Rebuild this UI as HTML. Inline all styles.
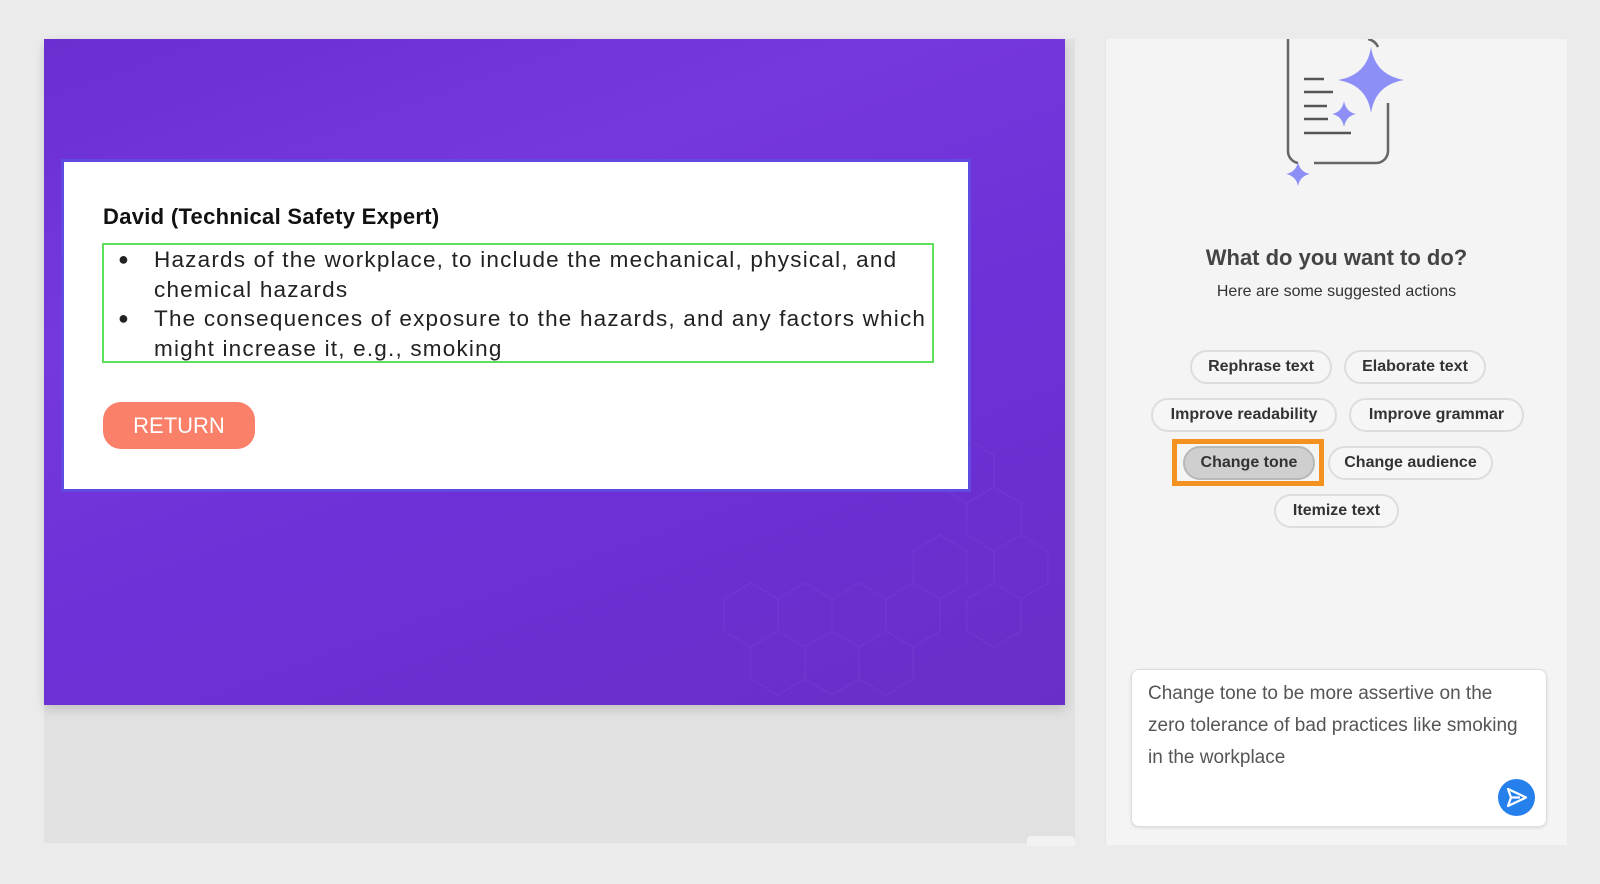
<!DOCTYPE html>
<html><head><meta charset="utf-8"><style>
*{margin:0;padding:0;box-sizing:border-box}
body{width:1600px;height:884px;background:#ebebeb;position:relative;overflow:hidden;font-family:"Liberation Sans",sans-serif}
.gray{position:absolute;left:44px;top:39px;width:1031px;height:804px;background:#e1e1e1}
.slide{position:absolute;left:44px;top:39px;width:1021px;height:666px;background:linear-gradient(160deg,#6a2fd0 0%,#7538dc 30%,#6c30d6 60%,#6a2ec8 100%);box-shadow:0 4px 10px rgba(0,0,0,.15)}
.card{position:absolute;left:17px;top:120px;width:910px;height:333px;background:#fff;border:3px solid #5f4be0}
.h{position:absolute;left:39px;top:42px;font-size:22px;font-weight:bold;color:#111;letter-spacing:0.3px}
.g{position:absolute;left:38px;top:81px;width:832px;height:120px;border:2px solid #5fe05a}
.g p{position:relative;padding-left:50px;font-size:22.5px;line-height:29.5px;color:#222;letter-spacing:1.2px;white-space:nowrap}
.g p b{position:absolute;left:14px;font-size:18px}
.ret{position:absolute;left:39px;top:240px;width:152px;height:47px;background:#fa806a;border-radius:18px;color:#fff;font-size:22px;text-align:center;line-height:47px}
.panel{position:absolute;left:1105px;top:39px;width:462px;height:806px;background:#f4f4f4;border-left:1px solid #e4e4e4}
.t1{position:absolute;left:0;width:100%;top:206px;text-align:center;font-size:22px;font-weight:bold;color:#444}
.t2{position:absolute;left:0;width:100%;top:244px;text-align:center;font-size:16px;color:#333}
.chip{position:absolute;height:34px;border:2px solid #ddd;border-radius:17px;background:#f6f6f6;font-size:16px;font-weight:bold;color:#333;text-align:center;line-height:30px}
.box{position:absolute;left:25px;top:630px;width:416px;height:158px;background:#fff;border:1px solid #ddd;border-radius:8px;box-shadow:0 1px 3px rgba(0,0,0,.1)}
.box p{position:absolute;left:16px;top:8px;font-size:19px;line-height:32px;color:#555;letter-spacing:0px;white-space:nowrap}
.send{position:absolute;left:366px;top:109px;width:37px;height:37px;border-radius:50%;background:#2680eb}
</style></head><body>
<div class="gray"></div>
<div class="slide">
<svg width="1021" height="666" style="position:absolute;left:0;top:0" fill="none" stroke="rgba(255,255,255,0.05)">
<path d="M680 560 l27 -16 27 16 v32 l-27 16 -27 -16z M734 560 l27 -16 27 16 v32 l-27 16 -27 -16z M788 560 l27 -16 27 16 v32 l-27 16 -27 -16z M842 560 l27 -16 27 16 v32 l-27 16 -27 -16z M707 608 l27 -16 27 16 v32 l-27 16 -27 -16z M761 608 l27 -16 27 16 v32 l-27 16 -27 -16z M815 608 l27 -16 27 16 v32 l-27 16 -27 -16z M869 512 l27 -16 27 16 v32 l-27 16 -27 -16z M923 464 l27 -16 27 16 v32 l-27 16 -27 -16z M896 416 l27 -16 27 16 v32 l-27 16 -27 -16z M950 512 l27 -16 27 16 v32 l-27 16 -27 -16z M923 560 l27 -16 27 16 v32 l-27 16 -27 -16z"/>
</svg>
<div class="card">
<div class="h">David (Technical Safety Expert)</div>
<div class="g">
<p><b>●</b>Hazards of the workplace, to include the mechanical, physical, and<br>chemical hazards</p>
<p><b>●</b>The consequences of exposure to the hazards, and any factors which<br>might increase it, e.g., smoking</p>
</div>
<div class="ret">RETURN</div>
</div>
</div>
<div style="position:absolute;left:1027px;top:836px;width:48px;height:10px;background:#f2f2f2;border-radius:4px 4px 0 0"></div>
<div class="panel">
<svg style="position:absolute;left:168px;top:0" width="136" height="150" viewBox="0 0 136 150">
<path d="M14 0 V112 a12 12 0 0 0 10 12 M40 124 H102 a12 12 0 0 0 12 -12 V64 M94 0 a14 14 0 0 1 10 8" fill="none" stroke="#666" stroke-width="2.5"/>
<path d="M30 40H50 M30 53H59 M30 67H53 M30 80H54 M30 94H77" stroke="#555" stroke-width="2.5"/>
<path d="M97 8 Q101 36 130 41 Q101 46 97 74 Q93 46 64 41 Q93 36 97 8z" fill="#8d8ff7"/>
<path d="M70 62 Q72 73 82 75 Q72 77 70 88 Q68 77 58 75 Q68 73 70 62z" fill="#8d8ff7"/>
<path d="M24 123 Q26 133 36 135 Q26 137 24 147 Q22 137 12 135 Q22 133 24 123z" fill="#8d8ff7"/>
</svg>
<div class="t1">What do you want to do?</div>
<div class="t2">Here are some suggested actions</div>
<div class="chip" style="left:84px;top:311px;width:142px">Rephrase text</div>
<div class="chip" style="left:238px;top:311px;width:142px">Elaborate text</div>
<div class="chip" style="left:45px;top:359px;width:186px">Improve readability</div>
<div class="chip" style="left:243px;top:359px;width:175px">Improve grammar</div>
<div style="position:absolute;left:66px;top:400px;width:152px;height:47px;border:5px solid #f39220"></div>
<div class="chip" style="left:77px;top:407px;width:132px;background:#cfcfcf;border-color:#b8b8b8">Change tone</div>
<div class="chip" style="left:222px;top:407px;width:165px">Change audience</div>
<div class="chip" style="left:168px;top:455px;width:125px">Itemize text</div>
<div class="box">
<p>Change tone to be more assertive on the<br>zero tolerance of bad practices like smoking<br>in the workplace</p>
<div class="send"><svg width="37" height="37" viewBox="0 0 37 37"><path d="M10 10 L28 18.5 L10 27 L13 18.5z M13 18.5H22" fill="none" stroke="#fff" stroke-width="2.2" stroke-linejoin="round"/></svg></div>
</div>
</div>
</body></html>
